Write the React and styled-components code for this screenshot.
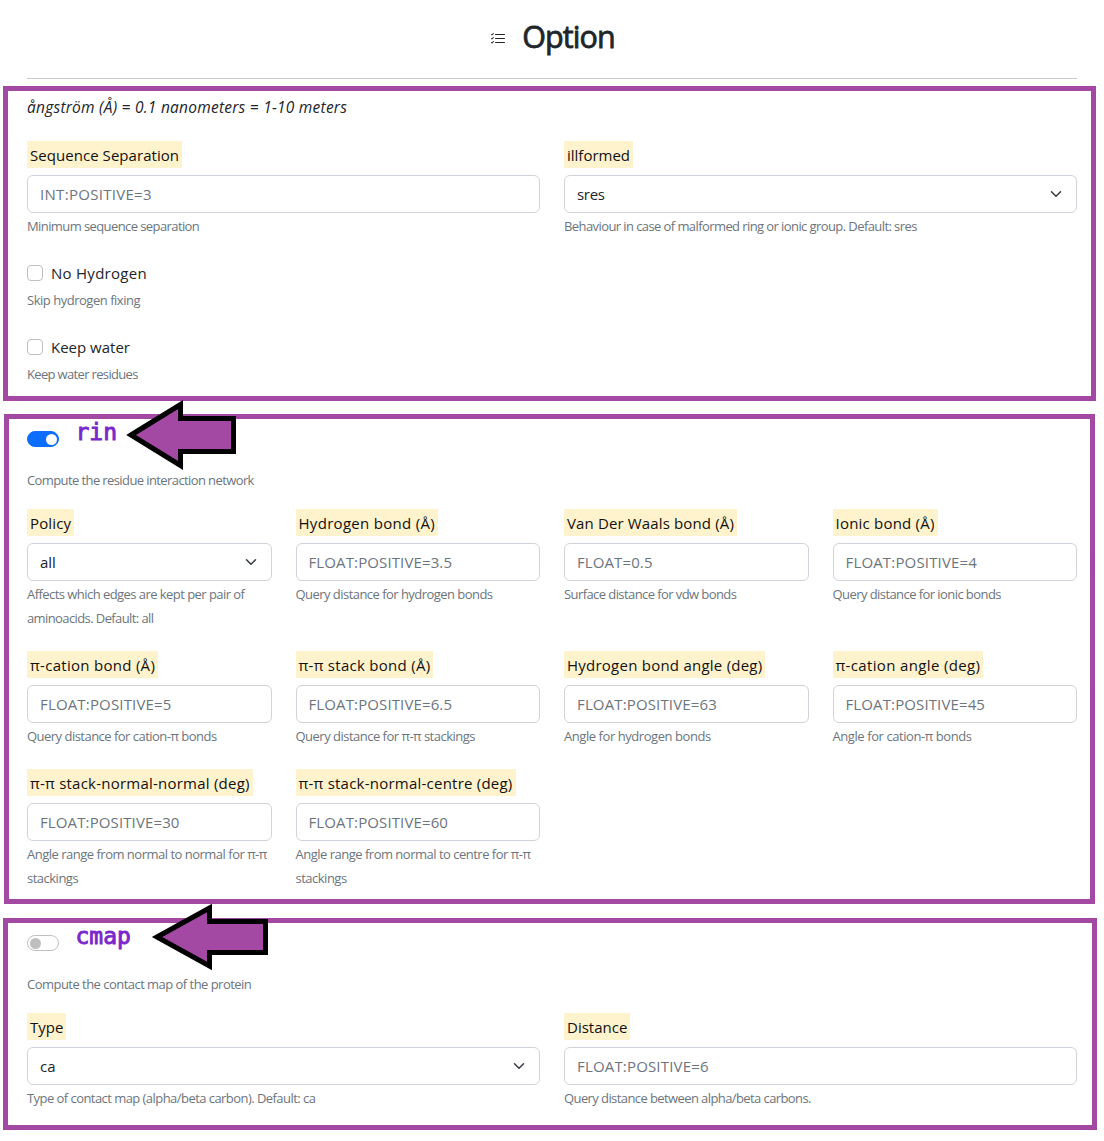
import React from 'react';
import styled, { createGlobalStyle } from 'styled-components';

const Global = createGlobalStyle`
  * { box-sizing: border-box; }
  body { margin: 0; background: #fff; color: #212529; font: 400 15px/24px "Open Sans", "Noto Sans", sans-serif; }
`;

const Page = styled.main`
  width: 1104px;
  height: 1141px;
  overflow: hidden;
`;

const Header = styled.header`
  display: flex;
  align-items: center;
  justify-content: center;
  height: 79px;
  margin: 0 27px;
  padding: 0 0 3px 1px;
  border-bottom: 1px solid #c8c9ca;
`;

const ListIcon = styled.svg`
  margin-top: 3px;
`;

const Title = styled.h1`
  margin: -4px 0 0 16px;
  font-size: 30.5px;
  line-height: 38px;
  font-weight: 400;
  -webkit-text-stroke: 0.8px #212529;
  letter-spacing: ${(p) => p.$track}px;
`;

const Panel = styled.section`
  display: flow-root;
  width: ${(p) => p.$width}px;
  height: ${(p) => p.$height}px;
  margin: ${(p) => p.$top}px 0 0 ${(p) => p.$left}px;
  padding-left: ${(p) => 22 - p.$left}px;
  border: 5px solid #a349a4;
`;

const Note = styled.em`
  display: block;
  margin-top: 4px;
  height: 46px;
  font-size: 15.5px;
`;

const Grid = styled.div`
  display: grid;
  width: 1050px;
  margin-top: ${(p) => p.$top || 0}px;
  grid-template-columns: repeat(${(p) => p.$cols}, 1fr);
  column-gap: 24px;
  row-gap: 21px;
`;

const Field = styled.div`
  min-width: 0;
`;

const Label = styled.label`
  display: block;
  width: max-content;
  height: 27px;
  padding: 2px 3px 0;
  background: #fff3cd;
  color: #111;
`;

const Box = styled.div`
  display: flex;
  align-items: center;
  justify-content: space-between;
  height: 38px;
  margin-top: 7px;
  padding: 0 12px;
  border: 1px solid #ced4da;
  border-radius: 6px;
  color: ${(p) => (p.$select ? '#212529' : '#6c757d')};
`;

const Help = styled.div`
  margin-top: ${(p) => p.$top ?? 1}px;
  height: 24px;
  font-size: 13px;
  color: #6c757d;
  white-space: nowrap;
`;

const Run = styled.span`
  letter-spacing: ${(p) => p.$track}px;
`;

const CheckRow = styled.div`
  display: flex;
  align-items: center;
  height: 24px;
  margin-top: 23px;
`;

const CheckBox = styled.span`
  width: 16px;
  height: 16px;
  margin-right: 8px;
  border: 1px solid #bfbfbf;
  border-radius: 4px;
`;

const SwitchRow = styled.div`
  position: relative;
  display: flex;
  height: 54px;
`;

const Switch = styled.span`
  display: flex;
  align-items: center;
  justify-content: ${(p) => (p.$on ? 'flex-end' : 'flex-start')};
  width: 32px;
  height: 16px;
  margin-top: 12px;
  padding: 0 1.5px;
  border: 1px solid ${(p) => (p.$on ? '#0d6efd' : '#bfbfbf')};
  border-radius: 8px;
  background: ${(p) => (p.$on ? '#0d6efd' : '#fff')};
`;

const Knob = styled.span`
  width: 11px;
  height: 11px;
  border-radius: 50%;
  background: ${(p) => (p.$on ? '#fff' : '#bfbfbf')};
`;

const Name = styled.code`
  margin: -1px 0 0 16.5px;
  font: 400 23px/28px "DejaVu Sans Mono", monospace;
  -webkit-text-stroke: 0.9px #7a28cb;
  color: #7a28cb;
`;

const Arrow = styled.svg`
  position: absolute;
  left: ${(p) => p.$left}px;
  top: ${(p) => p.$top}px;
  overflow: visible;
`;

function Chevron() {
  return (
    <svg width="16" height="12" viewBox="0 0 16 16">
      <path d="m2 5 6 6 6-6" fill="none" stroke="#343a40" strokeWidth="2" strokeLinecap="round" strokeLinejoin="round" />
    </svg>
  );
}

function Item({ label, value, help, select }) {
  return (
    <Field>
      <Label><Run $track={label[1]}>{label[0]}</Run></Label>
      <Box $select={select}>
        <Run $track={value[1]}>{value[0]}</Run>
        {select && <Chevron />}
      </Box>
      {help.map((line, i) => (
        <Help key={line[0]} $top={i ? 0 : 1}><Run $track={line[1]}>{line[0]}</Run></Help>
      ))}
    </Field>
  );
}

function Check({ label, help }) {
  return (
    <>
      <CheckRow><CheckBox /><Run $track={label[1]}>{label[0]}</Run></CheckRow>
      <Help $top={3}><Run $track={help[1]}>{help[0]}</Run></Help>
    </>
  );
}

const general = [
  { label: ['Sequence Separation', 0.05], value: ['INT:POSITIVE=3', 0.3], help: [['Minimum sequence separation', -0.59]] },
  { label: ['illformed', 0], value: ['sres', -0.3], select: true, help: [['Behaviour in case of malformed ring or ionic group. Default: sres', -0.585]] },
];

const rin = [
  { label: ['Policy', 0.15], value: ['all', 0], select: true, help: [['Affects which edges are kept per pair of', -0.55], ['aminoacids. Default: all', -0.6]] },
  { label: ['Hydrogen bond (Å)', 0.3], value: ['FLOAT:POSITIVE=3.5', 0.12], help: [['Query distance for hydrogen bonds', -0.54]] },
  { label: ['Van Der Waals bond (Å)', 0.14], value: ['FLOAT=0.5', 0.1], help: [['Surface distance for vdw bonds', -0.58]] },
  { label: ['Ionic bond (Å)', 0.21], value: ['FLOAT:POSITIVE=4', 0.16], help: [['Query distance for ionic bonds', -0.57]] },
  { label: ['π-cation bond (Å)', 0.29], value: ['FLOAT:POSITIVE=5', 0.16], help: [['Query distance for cation-π bonds', -0.52]] },
  { label: ['π-π stack bond (Å)', 0.28], value: ['FLOAT:POSITIVE=6.5', 0.12], help: [['Query distance for π-π stackings', -0.51]] },
  { label: ['Hydrogen bond angle (deg)', 0.24], value: ['FLOAT:POSITIVE=63', 0.14], help: [['Angle for hydrogen bonds', -0.44]] },
  { label: ['π-cation angle (deg)', 0.35], value: ['FLOAT:POSITIVE=45', 0.12], help: [['Angle for cation-π bonds', -0.42]] },
  { label: ['π-π stack-normal-normal (deg)', 0.23], value: ['FLOAT:POSITIVE=30', 0.12], help: [['Angle range from normal to normal for π-π', -0.5], ['stackings', -0.5]] },
  { label: ['π-π stack-normal-centre (deg)', 0.23], value: ['FLOAT:POSITIVE=60', 0.12], help: [['Angle range from normal to centre for π-π', -0.5], ['stackings', -0.5]] },
];

const cmap = [
  { label: ['Type', 0], value: ['ca', 0], select: true, help: [['Type of contact map (alpha/beta carbon). Default: ca', -0.55]] },
  { label: ['Distance', 0], value: ['FLOAT:POSITIVE=6', 0.17], help: [['Query distance between alpha/beta carbons.', -0.59]] },
];

export default function App() {
  return (
    <Page>
      <Global />
      <Header>
        <ListIcon width="16" height="16" viewBox="0 0 16 16" fill="#212529">
          <path fillRule="evenodd" d="M5 11.5a.5.5 0 0 1 .5-.5h9a.5.5 0 0 1 0 1h-9a.5.5 0 0 1-.5-.5m0-4a.5.5 0 0 1 .5-.5h9a.5.5 0 0 1 0 1h-9a.5.5 0 0 1-.5-.5m0-4a.5.5 0 0 1 .5-.5h9a.5.5 0 0 1 0 1h-9a.5.5 0 0 1-.5-.5M3.854 2.146a.5.5 0 0 1 0 .708l-1.5 1.5a.5.5 0 0 1-.708 0l-.5-.5a.5.5 0 1 1 .708-.708L2 3.293l1.146-1.147a.5.5 0 0 1 .708 0m0 4a.5.5 0 0 1 0 .708l-1.5 1.5a.5.5 0 0 1-.708 0l-.5-.5a.5.5 0 1 1 .708-.708L2 7.293l1.146-1.147a.5.5 0 0 1 .708 0m0 4a.5.5 0 0 1 0 .708l-1.5 1.5a.5.5 0 0 1-.708 0l-.5-.5a.5.5 0 0 1 .708-.708l.146.147 1.146-1.147a.5.5 0 0 1 .708 0" />
        </ListIcon>
        <Title $track={-0.9}>Option</Title>
      </Header>

      <Panel $left={3} $width={1093} $top={7} $height={315}>
        <Note><Run $track={0.24}>ångström (Å) = 0.1 nanometers = 1-10 meters</Run></Note>
        <Grid $cols={2}>{general.map((f) => <Item key={f.label[0]} {...f} />)}</Grid>
        <Check label={['No Hydrogen', 0.27]} help={['Skip hydrogen fixing', -0.48]} />
        <Check label={['Keep water', 0]} help={['Keep water residues', -0.66]} />
      </Panel>

      <Panel $left={4} $width={1091} $top={13} $height={490}>
        <SwitchRow>
          <Switch $on><Knob $on /></Switch>
          <Name>rin</Name>
          <Arrow $left={99} $top={-19} width="112" height="72">
            <path d="M5 35 54.5 4.5V18.5H107.5V51.5H54.5V65.5Z" fill="#a349a4" stroke="#000" strokeWidth="5" />
          </Arrow>
        </SwitchRow>
        <Help $top={-5}><Run $track={-0.6}>Compute the residue interaction network</Run></Help>
        <Grid $cols={4} $top={17}>{rin.map((f) => <Item key={f.label[0]} {...f} />)}</Grid>
      </Panel>

      <Panel $left={3} $width={1094} $top={14} $height={212}>
        <SwitchRow>
          <Switch><Knob /></Switch>
          <Name>cmap</Name>
          <Arrow $left={125} $top={-19} width="120" height="70">
            <path d="M5 33 57.5 4V17.5H113.5V48.5H57.5V62Z" fill="#a349a4" stroke="#000" strokeWidth="5" />
          </Arrow>
        </SwitchRow>
        <Help $top={-5}><Run $track={-0.53}>Compute the contact map of the protein</Run></Help>
        <Grid $cols={2} $top={17}>{cmap.map((f) => <Item key={f.label[0]} {...f} />)}</Grid>
      </Panel>
    </Page>
  );
}
